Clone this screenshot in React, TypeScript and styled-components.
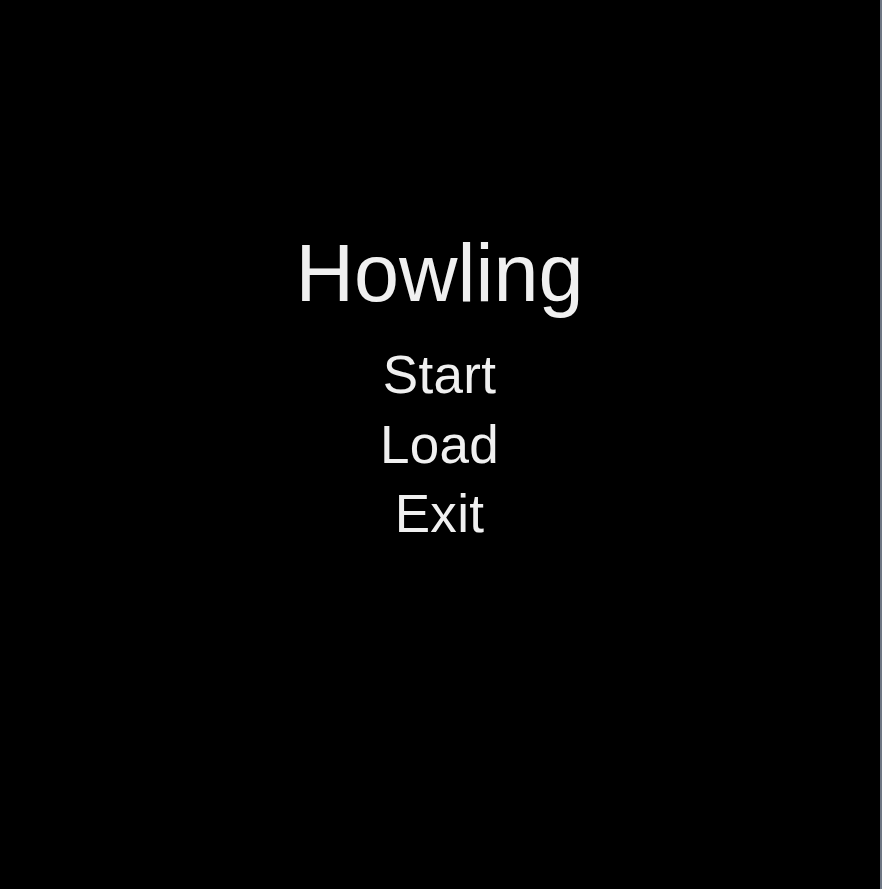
import React from "react";
import styled, { createGlobalStyle } from "styled-components";

const Global = createGlobalStyle`
  html, body {
    margin: 0;
    padding: 0;
    background: #000;
  }
`;

const Screen = styled.div`
  box-sizing: border-box;
  width: 882px;
  height: 889px;
  background: #000;
  border-right: 2px solid #6f7784;
  display: flex;
  flex-direction: column;
  align-items: center;
  padding-top: 233px;
  padding-right: 1px;
  font-family: "Liberation Sans", Arial, sans-serif;
  color: #f0f0f0;
`;

const Title = styled.h1`
  margin: 0;
  font-size: 81px;
  font-weight: 400;
  line-height: 81px;
`;

const Menu = styled.nav`
  display: flex;
  flex-direction: column;
  align-items: center;
  margin-top: 26px;
`;

const MenuItem = styled.div`
  font-size: 53px;
  line-height: 69.5px;
  letter-spacing: 0.3px;
  cursor: pointer;
`;

export default function App() {
  return (
    <>
      <Global />
      <Screen>
        <Title>Howling</Title>
        <Menu>
          <MenuItem>Start</MenuItem>
          <MenuItem>Load</MenuItem>
          <MenuItem>Exit</MenuItem>
        </Menu>
      </Screen>
    </>
  );
}
